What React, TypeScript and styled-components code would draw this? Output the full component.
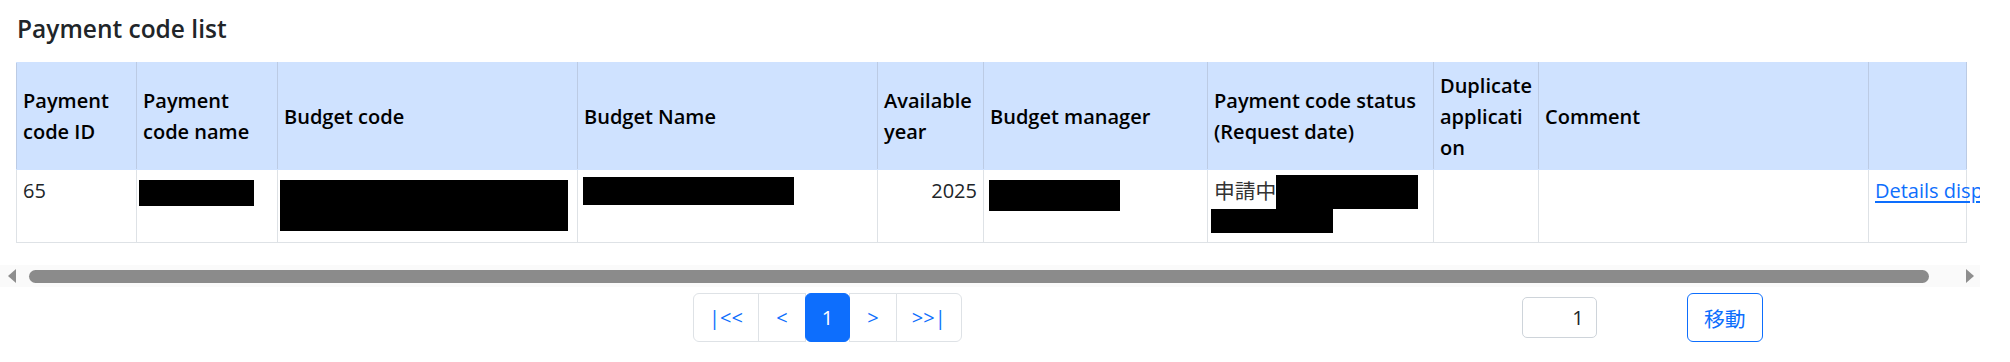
import styled, { createGlobalStyle } from 'styled-components'

const GlobalStyle = createGlobalStyle`
  body {
    margin: 0;
    background: #fff;
    color: #212529;
    font-family: "Open Sans", "Noto Sans CJK JP", sans-serif;
    font-size: 20px;
    line-height: 31px;
  }
`

const Page = styled.div`
  width: 2010px;
`

const Title = styled.h5`
  margin: 0 0 18px;
  padding: 13px 0 0 17px;
  font-size: 24.5px;
  font-weight: 600;
  line-height: 31px;
  color: #212529;
`

const ScrollArea = styled.div`
  width: 1980px;
  box-sizing: border-box;
  padding-left: 16px;
  overflow: hidden;
`

const ScrollBar = styled.div`
  display: flex;
  align-items: center;
  width: 1980px;
  height: 22px;
  background: #fafafa;
`

const Arrow = styled.span<{ $dir: 'left' | 'right' }>`
  width: 0;
  height: 0;
  border-top: 7.5px solid transparent;
  border-bottom: 7.5px solid transparent;
  ${p =>
    p.$dir === 'left'
      ? 'border-right: 8px solid #8e8e8e; margin-left: 8px;'
      : 'border-left: 8px solid #8e8e8e; margin-left: auto; margin-right: 6px;'}
`

const Thumb = styled.span`
  width: 1900px;
  height: 13px;
  margin-left: 13px;
  margin-top: 1px;
  border-radius: 7px;
  background: #8b8b8b;
`

const Table = styled.table`
  width: 1950px;
  table-layout: fixed;
  border-collapse: collapse;
  margin-bottom: 22px;
`

const Col = styled.col<{ $w: number }>`
  width: ${p => p.$w}px;
`

const HeadCell = styled.th`
  background: #cfe2ff;
  color: #000;
  font-weight: 600;
  text-align: left;
  vertical-align: middle;
  padding: 6.5px 6px;
  border: 1px solid #bccbe4;
  border-top-color: #cfe2ff;
  border-bottom-color: #cfe2ff;
`

const Cell = styled.td<{ $align?: 'left' | 'right'; $nowrap?: boolean }>`
  padding: 4.5px 6px 5.5px;
  vertical-align: top;
  border: 1px solid #dee2e6;
  text-align: ${p => p.$align ?? 'left'};
  white-space: ${p => (p.$nowrap ? 'nowrap' : 'normal')};
`

const Redact = styled.span<{ $w: number; $h: number; $dx?: number; $dy?: number; $white?: boolean }>`
  display: block;
  flex: none;
  width: ${p => p.$w}px;
  height: ${p => p.$h}px;
  margin-left: ${p => p.$dx ?? 0}px;
  margin-top: ${p => p.$dy ?? 0}px;
  background: ${p => (p.$white ? '#fff' : '#000')};
`

const StatusLine = styled.div`
  display: flex;
  height: 31px;
`

const StatusText = styled.span`
  font-family: "Noto Sans CJK JP", sans-serif;
  font-size: 20.8px;
  color: #333;
`

const DetailLink = styled.a`
  color: #0d6efd;
  text-decoration: underline;
  text-underline-offset: 3px;
  cursor: pointer;
`

const Footer = styled.div`
  display: flex;
  align-items: center;
  margin-top: 6px;
  padding-left: 693px;
`

const Pager = styled.ul`
  display: flex;
  list-style: none;
  margin: 0;
  padding: 0;
`

const PageLink = styled.li<{ $active?: boolean }>`
  position: relative;
  box-sizing: border-box;
  min-width: ${p => (p.$active ? 45 : 48)}px;
  padding: 7.8px 15px;
  margin-left: -1px;
  border: 1px solid ${p => (p.$active ? '#0d6efd' : '#dee2e6')};
  background: ${p => (p.$active ? '#0d6efd' : '#fff')};
  color: ${p => (p.$active ? '#fff' : '#0d6efd')};
  border-radius: ${p => (p.$active ? '6px' : '0')};
  z-index: ${p => (p.$active ? 1 : 0)};
  text-align: center;
  line-height: 31px;
  cursor: pointer;

  &:first-child {
    margin-left: 0;
    border-radius: 6px 0 0 6px;
  }
  &:last-child {
    border-radius: 0 6px 6px 0;
  }
`

const JumpInput = styled.input`
  width: 75px;
  height: 41px;
  box-sizing: border-box;
  margin-left: 560px;
  padding: 0 12px;
  border: 1px solid #ced4da;
  border-radius: 5px;
  font: inherit;
  color: #212529;
  text-align: right;
`

const MoveButton = styled.button`
  width: 76px;
  height: 49px;
  margin-left: 90px;
  padding: 0;
  border: 1px solid #0d6efd;
  border-radius: 6px;
  background: #fff;
  color: #0d6efd;
  font-family: "Noto Sans CJK JP", sans-serif;
  font-size: 20.8px;
  cursor: pointer;
`

const widths = [120, 141, 300, 300, 106, 224, 226, 105, 330, 98]

const App = () => {
  return (
    <Page>
      <GlobalStyle />
      <Title>Payment code list</Title>
      <ScrollArea>
        <Table>
          <colgroup>
            {widths.map((w, i) => (
              <Col key={i} $w={w} />
            ))}
          </colgroup>
          <thead>
            <tr>
              <HeadCell>Payment code ID</HeadCell>
              <HeadCell>Payment code name</HeadCell>
              <HeadCell>Budget code</HeadCell>
              <HeadCell>Budget Name</HeadCell>
              <HeadCell>Available year</HeadCell>
              <HeadCell>Budget manager</HeadCell>
              <HeadCell>Payment code status (Request date)</HeadCell>
              <HeadCell>
                Duplicate applicati<wbr />on
              </HeadCell>
              <HeadCell>Comment</HeadCell>
              <HeadCell></HeadCell>
            </tr>
          </thead>
          <tbody>
            <tr>
              <Cell>65</Cell>
              <Cell>
                <Redact $w={115} $h={26} $dx={-4} $dy={5} />
              </Cell>
              <Cell>
                <Redact $w={288} $h={51} $dx={-4} $dy={5} />
              </Cell>
              <Cell>
                <Redact $w={211} $h={28} $dx={-1} $dy={2} />
              </Cell>
              <Cell $align="right">2025</Cell>
              <Cell>
                <Redact $w={131} $h={31} $dx={-1} $dy={5} />
              </Cell>
              <Cell>
                <StatusLine>
                  <StatusText>申請中</StatusText>
                  <Redact $w={142} $h={34} />
                </StatusLine>
                <StatusLine>
                  <Redact $w={122} $h={24} $dx={-3} $dy={3} />
                </StatusLine>
              </Cell>
              <Cell></Cell>
              <Cell>
                <Redact $white $w={40} $h={36} $dx={-12} $dy={-2} />
              </Cell>
              <Cell $nowrap>
                <DetailLink>Details display</DetailLink>
              </Cell>
            </tr>
          </tbody>
        </Table>
      </ScrollArea>
      <ScrollBar>
        <Arrow $dir="left" />
        <Thumb />
        <Arrow $dir="right" />
      </ScrollBar>
      <Footer>
        <Pager>
          <PageLink>|&lt;&lt;</PageLink>
          <PageLink>&lt;</PageLink>
          <PageLink $active>1</PageLink>
          <PageLink>&gt;</PageLink>
          <PageLink>&gt;&gt;|</PageLink>
        </Pager>
        <JumpInput defaultValue="1" />
        <MoveButton>移動</MoveButton>
      </Footer>
    </Page>
  )
}

export default App
